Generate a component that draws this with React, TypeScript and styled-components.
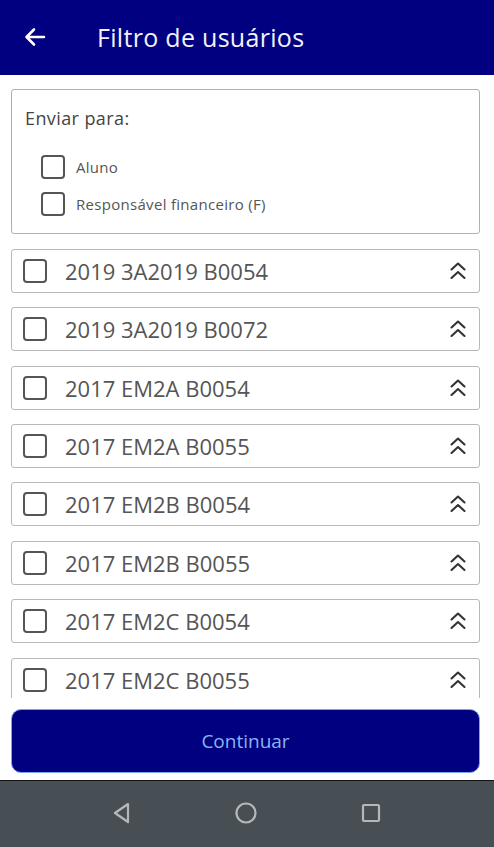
import styled, { createGlobalStyle } from 'styled-components';

const GlobalStyle = createGlobalStyle`
  * { box-sizing: border-box; }
  html, body { margin: 0; padding: 0; background: #ffffff; }
  body { font-family: "Open Sans", "Noto Sans", Lato, sans-serif; }
`;

const groups = [
  '2019 3A2019 B0054',
  '2019 3A2019 B0072',
  '2017 EM2A B0054',
  '2017 EM2A B0055',
  '2017 EM2B B0054',
  '2017 EM2B B0055',
  '2017 EM2C B0054',
  '2017 EM2C B0055',
];

const recipients = ['Aluno', 'Responsável financeiro (F)'];

const BackArrow = () => (
  <svg width="24" height="24" viewBox="0 0 24 24">
    <path d="M21 12H4M11 4.5L3.5 12l7.5 7.5" fill="none" stroke="#fff" strokeWidth="2.6" strokeLinecap="round" strokeLinejoin="round" />
  </svg>
);

const DoubleChevron = () => (
  <svg width="18" height="22" viewBox="0 0 18 22">
    <path d="M2.5 9.5L9 3.5l6.5 6M2.5 18L9 12l6.5 6" fill="none" stroke="#333" strokeWidth="2.1" strokeLinecap="round" strokeLinejoin="round" />
  </svg>
);

const App = () => {
  return (
    <Screen>
      <GlobalStyle />
      <Header>
        <BackButton>
          <BackArrow />
        </BackButton>
        <Title>Filtro de usuários</Title>
      </Header>
      <Scroll>
        <SendBox>
          <SendTitle>Enviar para:</SendTitle>
          <Options>
            {recipients.map((r) => (
              <Option key={r}>
                <Check />
                <span>{r}</span>
              </Option>
            ))}
          </Options>
        </SendBox>
        {groups.map((g) => (
          <GroupRow key={g}>
            <Check />
            <GroupName>{g}</GroupName>
            <DoubleChevron />
          </GroupRow>
        ))}
      </Scroll>
      <Footer>
        <ContinueButton>
          <span>Continuar</span>
        </ContinueButton>
      </Footer>
      <NavBar>
        <svg width="20" height="24" viewBox="0 0 20 24">
          <path d="M16 3L3 12l13 9z" fill="none" stroke="#b4b8bb" strokeWidth="2.2" strokeLinejoin="round" />
        </svg>
        <svg width="24" height="24" viewBox="0 0 24 24">
          <circle cx="12" cy="12" r="9.5" fill="none" stroke="#b4b8bb" strokeWidth="2.2" />
        </svg>
        <svg width="22" height="22" viewBox="0 0 22 22">
          <rect x="3" y="3" width="16" height="16" rx="1" fill="none" stroke="#b4b8bb" strokeWidth="2.2" />
        </svg>
      </NavBar>
    </Screen>
  );
};

export default App;

const Screen = styled.div`
  width: 494px;
  height: 847px;
  display: flex;
  flex-direction: column;
  overflow: hidden;
  background: #fff;
`;

const Header = styled.header`
  height: 75px;
  flex-shrink: 0;
  background: #000080;
  display: flex;
  align-items: center;
  padding: 0 0 0 23px;
  gap: 50px;
`;

const BackButton = styled.div`
  width: 24px;
  height: 24px;
  display: flex;
  align-items: center;
  justify-content: center;
  margin-top: -2px;
`;

const Title = styled.h1`
  margin: 0;
  color: #f2f2f8;
  font-size: 25px;
  letter-spacing: 0.3px;
  font-weight: 400;
  margin-top: -2px;
`;

const Scroll = styled.div`
  height: 623px;
  flex-shrink: 0;
  overflow: hidden;
  padding: 14px 14px 0 11px;
  display: flex;
  flex-direction: column;
  gap: 14.4px;
`;

const SendBox = styled.div`
  height: 145px;
  flex-shrink: 0;
  border: 1px solid #b0b0b0;
  border-radius: 3px;
  padding: 15px 0 0 13px;
  margin-bottom: 0.5px;
`;

const SendTitle = styled.div`
  font-size: 18px;
  letter-spacing: 0.4px;
  color: #444;
  line-height: 26px;
`;

const Options = styled.div`
  margin-top: 24px;
  padding-left: 16px;
  display: flex;
  flex-direction: column;
  gap: 13px;
`;

const Option = styled.label`
  display: flex;
  align-items: center;
  gap: 11px;
  font-size: 15px;
  letter-spacing: 0.3px;
  color: #555;
`;

const Check = styled.span`
  width: 24px;
  height: 24px;
  flex-shrink: 0;
  border: 2.5px solid #555;
  border-radius: 4px;
`;

const GroupRow = styled.div`
  height: 44px;
  flex-shrink: 0;
  border: 1px solid #b8b8b8;
  border-radius: 3px;
  display: flex;
  align-items: center;
  padding: 0 12px 0 11px;
  gap: 18px;
`;

const GroupName = styled.span`
  flex: 1;
  font-size: 22px;
  color: #555;
`;

const Footer = styled.div`
  flex: 1;
  padding: 11px 14px 0 11px;
`;

const ContinueButton = styled.div`
  height: 64px;
  background: #000080;
  border: 1.5px solid #7aa7ee;
  border-radius: 10px;
  color: #8cb3f4;
  font-size: 19px;
  line-height: 26px;
  display: flex;
  align-items: center;
  justify-content: center;
`;

const NavBar = styled.nav`
  height: 67px;
  flex-shrink: 0;
  background: #474f54;
  border-top: 1px solid #111;
  display: flex;
  align-items: center;
  justify-content: center;
  gap: 102px;
  padding-bottom: 2px;
`;
